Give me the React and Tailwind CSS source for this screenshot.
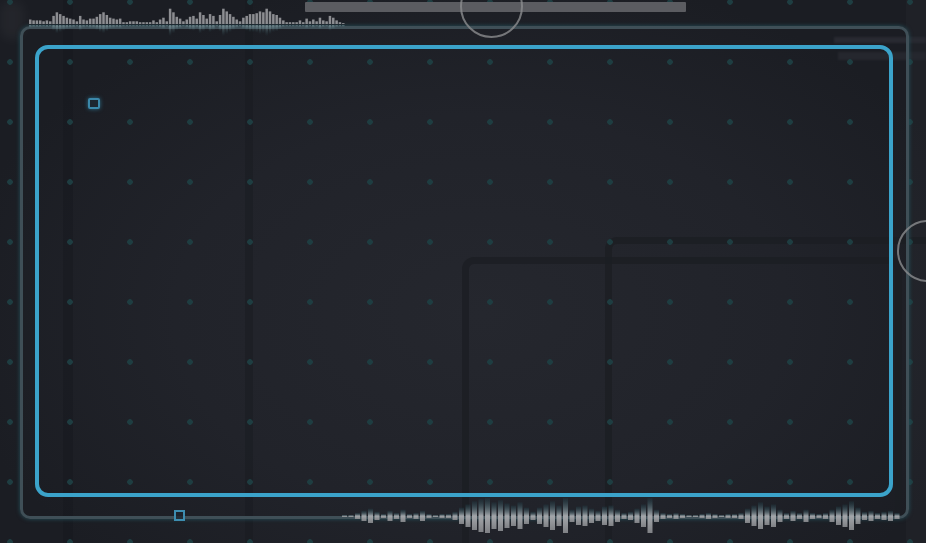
import React from 'react';

// waveform amplitudes read off the reference
const TOP = [5,4,4,4,3,4,3,9,13,11,9,7,6,5,3,9,5,4,6,6,8,11,13,10,7,6,5,6,2,2,3,3,3,2,2,2,2,4,2,5,7,3,17,13,8,6,3,5,8,9,6,13,10,6,11,9,3,10,17,14,11,8,5,3,7,9,11,11,12,14,13,17,14,11,10,7,4,2,2,2,2,4,2,6,3,5,3,7,4,3,9,7,4,2,1];

const BOTTOM = [1,1,3,5,7,4,2,5,3,6,2,3,5,2,1,2,2,4,8,11,14,16,17,13,15,12,10,13,8,4,8,11,14,10,17,6,9,10,7,5,9,10,6,3,4,7,11,17,6,3,2,3,2,1,1,2,3,2,1,2,2,3,7,10,13,9,11,6,3,5,3,6,3,2,3,6,9,11,14,8,4,5,3,4,5,3];

function TopWave() {
  const base = 24;
  return (
    <svg className="absolute left-[29px] top-0" width="320" height="40">
      <defs>
        <linearGradient id="refl" x1="0" y1="0" x2="0" y2="1">
          <stop offset="0" stopColor="#b9d2d6" stopOpacity="0.5" />
          <stop offset="1" stopColor="#2d6670" stopOpacity="0" />
        </linearGradient>
      </defs>
      {TOP.map((h, i) => (
        <g key={i}>
          <rect x={i * 3.33} y={base - h * 0.9} width="2.5" height={h * 0.9} fill="#8c8d91" />
          <rect x={i * 3.33} y={base + 1} width="2.5" height={Math.max(2, h * 0.65)} fill="url(#refl)" />
        </g>
      ))}
    </svg>
  );
}

function BottomWave() {
  const mid = 21;
  return (
    <svg className="absolute left-[340px] top-[495px]" width="566" height="46">
      <defs>
        <linearGradient id="up" x1="0" y1="0" x2="0" y2="1">
          <stop offset="0" stopColor="#1f4a55" stopOpacity="0.2" />
          <stop offset="1" stopColor="#a9adb1" stopOpacity="0.95" />
        </linearGradient>
        <linearGradient id="down" x1="0" y1="0" x2="0" y2="1">
          <stop offset="0" stopColor="#a3a6aa" />
          <stop offset="1" stopColor="#7f8185" />
        </linearGradient>
      </defs>
      {BOTTOM.map((a, i) => (
        <g key={i}>
          <rect x={2 + i * 6.5} y={mid - a * 1.05} width="5" height={a * 1.05} fill="url(#up)" />
          <rect x={2 + i * 6.5} y={mid} width="5" height={a} fill="url(#down)" />
        </g>
      ))}
    </svg>
  );
}

export default function App() {
  return (
    <div className="relative h-[543px] w-full overflow-hidden bg-[#1b1d23] font-['Liberation_Sans',sans-serif]">
      {/* soft light in the middle of the canvas */}
      <div className="absolute inset-0 bg-[radial-gradient(ellipse_at_52%_58%,#25272e_0%,#21232a_45%,transparent_78%)]" />
      <div className="absolute left-0 top-0 h-[40px] w-[24px] rounded-full bg-white/[0.04] blur-[6px]" />

      {/* darker column stripes */}
      <div className="absolute inset-0 flex">
        <div className="w-[63px]" />
        <div className="w-[10px] bg-[#16181d]/50" />
        <div className="w-[172px]" />
        <div className="w-[8px] bg-[#16181d]/40" />
        <div className="flex-1" />
        <div className="w-[20px] bg-white/[0.02]" />
      </div>

      {/* background clip rectangles */}
      <div className="absolute left-[462px] top-[257px] h-[330px] w-[440px] rounded-[12px] border-[7px] border-[#1c1e23]/80" />
      <div className="absolute left-[605px] top-[237px] h-[350px] w-[400px] rounded-[12px] border-[7px] border-[#1c1e23]/80" />
      <div className="absolute left-[834px] top-[37px] h-[6px] w-[92px] bg-[#282a31] blur-[1px]" />
      <div className="absolute left-[838px] top-[52px] h-[8px] w-[88px] bg-[#25272e] blur-[1px]" />

      {/* dot grid */}
      <div className="absolute inset-0 bg-[radial-gradient(circle,#1e3d41_2.5px,transparent_3.1px)] bg-[length:60px_60px] bg-[position:-20px_-28px]" />

      {/* scroll bar on top */}
      <div className="absolute left-[305px] top-[2px] h-[10px] w-[381px] rounded-[1px] bg-[#5b5c61]" />

      {/* frames */}
      <div className="relative pl-[20px] pt-[26px]">
        <div className="h-[493px] w-[889px] rounded-[10px] border-[3px] border-[#3f4f57] pl-[12px] pt-[16px] shadow-[0_0_4px_#24505b]">
          <div className="h-[452px] w-[858px] rounded-[13px] border-4 border-[#3ba3ca] pl-[49px] pt-[49px]">
            <div className="h-[11px] w-[12px] rounded-[2px] border-[2.5px] border-[#3b88aa] bg-[#1d2630] shadow-[0_0_4px_#2d6f8a]" />
          </div>
        </div>
      </div>

      <TopWave />
      <BottomWave />

      <div className="absolute left-[174px] top-[510px] h-[11px] w-[11px] border-2 border-[#3d8db0] bg-[#1d2630]/80" />

      {/* handles */}
      <div className="absolute left-[460px] top-[-25px] h-[63px] w-[63px] rounded-full border-2 border-[#8b8c8f]/80" />
      <div className="absolute left-[897px] top-[220px] h-[62px] w-[62px] rounded-full border-2 border-[#8b8c8f]/80" />
    </div>
  );
}
